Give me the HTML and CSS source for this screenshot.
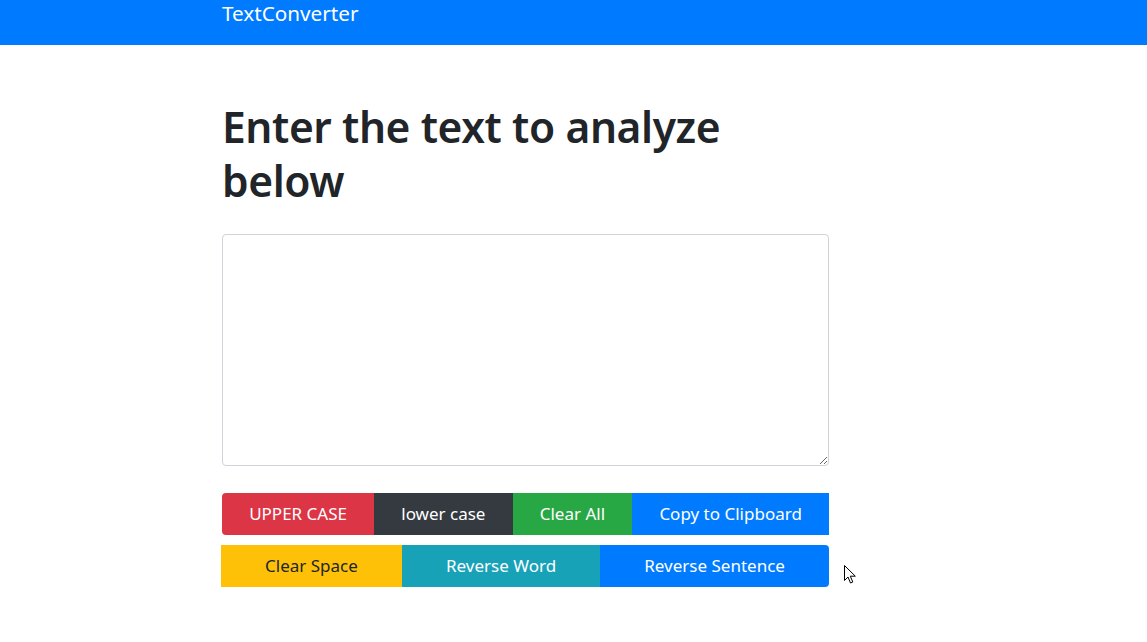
FILE: index.html
```html
<!DOCTYPE html>
<html lang="en">
<head>
<meta charset="utf-8">
<title>TextConverter</title>
<link rel="stylesheet" href="styles.css">
</head>
<body>
<nav class="navbar">
  <a class="brand" href="#">TextConverter</a>
</nav>
<main class="main">
  <h1 class="title">Enter the text to analyze below</h1>
  <textarea class="text-box" rows="8"></textarea>
  <div class="btn-row">
    <button class="btn btn-red first">UPPER CASE</button>
    <button class="btn btn-dark">lower case</button>
    <button class="btn btn-green">Clear All</button>
    <button class="btn btn-blue">Copy to Clipboard</button>
  </div>
  <div class="btn-row second">
    <button class="btn btn-yellow">Clear Space</button>
    <button class="btn btn-teal">Reverse Word</button>
    <button class="btn btn-blue last">Reverse Sentence</button>
  </div>
</main>
<svg class="cursor" width="13" height="20" viewBox="0 0 13 20" aria-hidden="true">
  <path d="M0.5 0.5 L0.5 15.5 L4 12 L6.5 18 L8.8 17 L6.3 11.2 L11.3 11.2 Z" fill="#fff" stroke="#000" stroke-width="1" stroke-linejoin="miter"/>
</svg>
</body>
</html>
```
FILE: styles.css
```css
* { box-sizing: border-box; }
html, body { margin: 0; padding: 0; }
body {
  font-family: "Noto Sans", "Open Sans", sans-serif;
  color: #212529;
  background: #fff;
  position: relative;
  min-height: 642px;
}
.navbar {
  background: #007bff;
  height: 45px;
  padding-left: 222px;
  display: flex;
  align-items: flex-start;
}
.brand {
  color: #fff;
  text-decoration: none;
  font-size: 20.7px;
  line-height: 27px;
}
.main {
  width: 607px;
  margin-left: 222px;
  padding-top: 55px;
}
.title {
  font-size: 42.5px;
  font-weight: 600;
  line-height: 54px;
  margin: 0 0 26px 0;
  letter-spacing: -0.4px;
}
.text-box {
  display: block;
  width: 607px;
  height: 232px;
  border: 1px solid #ced4da;
  border-radius: 4px;
  margin: 0 0 27px 0;
  font-family: inherit;
  font-size: 17px;
  padding: 7px 13px;
}
.btn-row {
  display: flex;
}
.btn-row.second {
  margin-top: 10px;
  margin-left: -1px;
  width: 608px;
}
.btn {
  flex: 1 1 auto;
  height: 42px;
  border: none;
  color: #fff;
  font-family: inherit;
  font-size: 17px;
  padding: 0 13px 2px 13px;
  border-radius: 0;
  cursor: pointer;
}
.btn.first { border-radius: 4px 0 0 4px; }
.btn.last { border-radius: 0 4px 4px 0; }
.btn-red { background: #dc3545; }
.btn-dark { background: #343a40; }
.btn-green { background: #28a745; }
.btn-blue { background: #007bff; }
.btn-yellow { background: #ffc107; color: #212529; }
.btn-teal { background: #17a2b8; }
.cursor {
  position: absolute;
  left: 844px;
  top: 565px;
}
```
